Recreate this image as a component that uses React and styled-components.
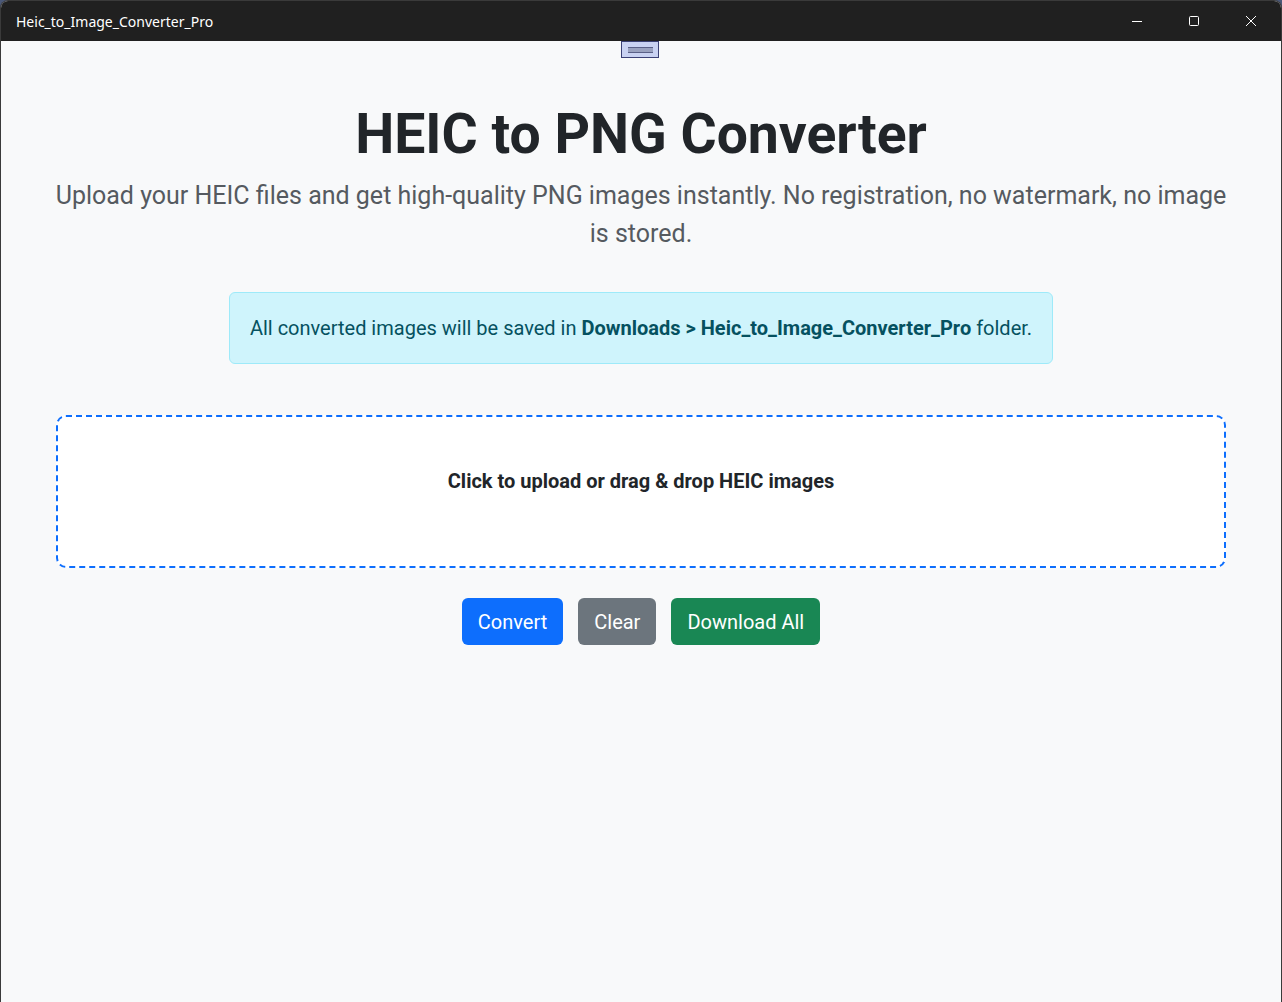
import React from 'react'
import styled, { createGlobalStyle } from 'styled-components'

const Global = createGlobalStyle`
  html, body {
    margin: 0;
    padding: 0;
    background: #4a5878;
  }
  * { box-sizing: border-box; }
`

const Window = styled.div`
  width: 1282px;
  height: 1002px;
  display: flex;
  flex-direction: column;
  background: #f8f9fa;
  border-radius: 8px 8px 0 0;
  overflow: hidden;
  border: 1px solid #3a3a3a;
  border-bottom: none;
  position: relative;
`

const TitleBar = styled.div`
  height: 40px;
  flex: none;
  background: #202020;
  display: flex;
  align-items: center;
  justify-content: space-between;
  color: #fff;
  font-family: 'Noto Sans', 'Open Sans', sans-serif;
  font-size: 14px;
  padding-left: 15px;
`

const Controls = styled.div`
  display: flex;
  height: 100%;
  padding-right: 2px;
`

const ControlBtn = styled.div`
  width: 57px;
  height: 100%;
  display: flex;
  align-items: center;
  justify-content: center;
`

const Handle = styled.div`
  position: absolute;
  top: 40px;
  left: 620px;
  width: 38px;
  height: 17px;
  background: #c9d2f2;
  border: 1px solid #3b4175;
  display: flex;
  align-items: center;
  justify-content: center;
  &::after {
    content: '';
    width: 25px;
    height: 4px;
    border-top: 1px solid #5a6088;
    border-bottom: 1px solid #5a6088;
    background: #9aa2c0;
  }
`

const Content = styled.main`
  flex: 1;
  display: flex;
  flex-direction: column;
  align-items: center;
  padding: 59px 55px 0;
  font-family: Roboto, 'Liberation Sans', sans-serif;
`

const Heading = styled.h1`
  margin: 0;
  font-size: 55.3px;
  font-weight: 700;
  line-height: 70px;
  color: #212529;
`

const Lead = styled.p`
  margin: 7px -4px 0;
  font-size: 25px;
  line-height: 38px;
  color: #555a60;
  text-align: center;
`

const Alert = styled.div`
  margin-top: 39px;
  padding: 23px 20px 22px;
  background: #cff4fc;
  border: 1px solid #9eeaf9;
  border-radius: 6px;
  color: #055160;
  font-size: 20px;
  line-height: 25px;
  b { font-weight: 700; }
`

const DropZone = styled.div`
  margin-top: 51px;
  width: 100%;
  height: 153px;
  background: #fff;
  border: 2px dashed #0d6efd;
  border-radius: 10px;
  display: flex;
  justify-content: center;
  padding-top: 52px;
  font-size: 20px;
  font-weight: 700;
  line-height: 25px;
  color: #212529;
`

const Buttons = styled.div`
  margin-top: 30px;
  display: flex;
  gap: 15px;
`

const colors = {
  primary: '#0d6efd',
  secondary: '#6c757d',
  success: '#198754',
}

const Button = styled.button`
  height: 47px;
  padding: 0 16px;
  border: none;
  border-radius: 6px;
  background: ${p => colors[p.$variant]};
  color: #fff;
  font-family: Roboto, 'Liberation Sans', sans-serif;
  font-size: 20px;
`

export default function App() {
  return (
    <>
      <Global />
      <Window>
        <TitleBar>
          <span>Heic_to_Image_Converter_Pro</span>
          <Controls>
            <ControlBtn>
              <svg width="12" height="12" viewBox="0 0 12 12">
                <path d="M1 6.5h10" stroke="#fff" strokeWidth="1" />
              </svg>
            </ControlBtn>
            <ControlBtn>
              <svg width="12" height="12" viewBox="0 0 12 12">
                <rect x="1.5" y="1.5" width="9" height="9" rx="1" fill="none" stroke="#fff" strokeWidth="1" />
              </svg>
            </ControlBtn>
            <ControlBtn>
              <svg width="12" height="12" viewBox="0 0 12 12">
                <path d="M1 1l10 10M11 1L1 11" stroke="#fff" strokeWidth="1" />
              </svg>
            </ControlBtn>
          </Controls>
        </TitleBar>
        <Handle />
        <Content>
          <Heading>HEIC to PNG Converter</Heading>
          <Lead>
            Upload your HEIC files and get high-quality PNG images instantly. No registration, no watermark, no image is stored.
          </Lead>
          <Alert>
            All converted images will be saved in <b>Downloads &gt; Heic_to_Image_Converter_Pro</b> folder.
          </Alert>
          <DropZone>Click to upload or drag &amp; drop HEIC images</DropZone>
          <Buttons>
            <Button $variant="primary">Convert</Button>
            <Button $variant="secondary">Clear</Button>
            <Button $variant="success">Download All</Button>
          </Buttons>
        </Content>
      </Window>
    </>
  )
}
